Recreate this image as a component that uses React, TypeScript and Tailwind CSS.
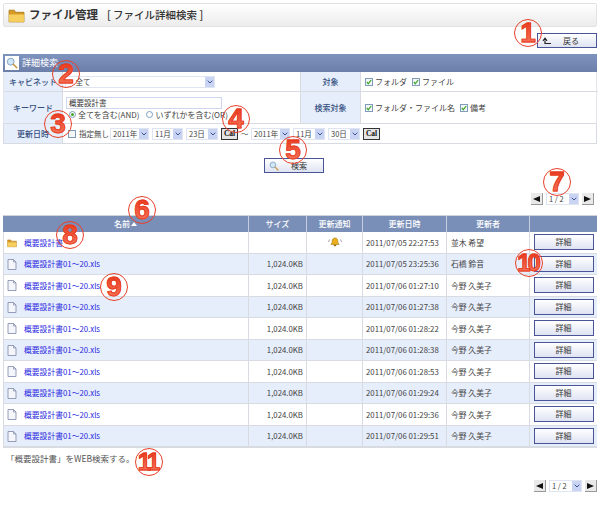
import type { ReactNode } from "react";

const JP = "font-['Noto_Sans_CJK_JP','Liberation_Sans',sans-serif]";

type FileRow = { name: string; folder?: boolean; size: string; bell?: boolean; date: string; user: string };

const file = "概要設計書01～20.xls";

const rows: FileRow[] = [
  { name: "概要設計書", folder: true, size: "", bell: true, date: "2011/07/05 22:27:53", user: "並木 希望" },
  { name: file, size: "1,024.0KB", date: "2011/07/05 23:25:36", user: "石橋 鈴音" },
  { name: file, size: "1,024.0KB", date: "2011/07/06 01:27:10", user: "今野 久美子" },
  { name: file, size: "1,024.0KB", date: "2011/07/06 01:27:38", user: "今野 久美子" },
  { name: file, size: "1,024.0KB", date: "2011/07/06 01:28:22", user: "今野 久美子" },
  { name: file, size: "1,024.0KB", date: "2011/07/06 01:28:38", user: "今野 久美子" },
  { name: file, size: "1,024.0KB", date: "2011/07/06 01:28:53", user: "今野 久美子" },
  { name: file, size: "1,024.0KB", date: "2011/07/06 01:29:24", user: "今野 久美子" },
  { name: file, size: "1,024.0KB", date: "2011/07/06 01:29:36", user: "今野 久美子" },
  { name: file, size: "1,024.0KB", date: "2011/07/06 01:29:51", user: "今野 久美子" },
];

// red numbered callouts drawn over the screenshot
const callouts = [
  { n: "1", x: 528, y: 33 },
  { n: "2", x: 66, y: 74 },
  { n: "3", x: 58, y: 124 },
  { n: "4", x: 236, y: 119 },
  { n: "5", x: 293, y: 150 },
  { n: "6", x: 142, y: 210 },
  { n: "7", x: 557, y: 182 },
  { n: "8", x: 70, y: 235 },
  { n: "9", x: 114, y: 287 },
  { n: "10", x: 529, y: 263 },
  { n: "11", x: 149, y: 462 },
];

function Callout({ n, x, y }: { n: string; x: number; y: number }) {
  return (
    <div
      className="absolute w-[28px] h-[28px] rounded-full border-[1.5px] border-[#e8402a] flex items-center justify-center"
      style={{ left: x - 14, top: y - 14 }}
    >
      <span
        className={`font-['Liberation_Sans',sans-serif] font-bold leading-none bg-gradient-to-b from-[#e62f10] to-[#f77a60] bg-clip-text text-transparent [-webkit-text-stroke:0.8px_#e8381a] ${
          n.length > 1 ? "text-[24px] tracking-[-3px] pr-[3px]" : "text-[28px]"
        }`}
      >
        {n}
      </span>
    </div>
  );
}

function FolderIcon({ size = 12 }: { size?: number }) {
  return (
    <svg width={size} height={size} viewBox="0 0 16 16" className="shrink-0">
      <path d="M1 3h5l1 2h8v9H1z" fill="#d99a24" stroke="#a87a1a" strokeWidth="0.8" />
      <path d="M1 7h14v7H1z" fill="#f7cf5e" />
    </svg>
  );
}

function FileIcon() {
  return (
    <svg width="10" height="11" viewBox="0 0 10 11" className="shrink-0">
      <path d="M1 .5h5.500L9 3v7.500H1z" fill="#f4f6fb" stroke="#7d88a8" strokeWidth="0.8" />
      <path d="M6.500.5V3H9" fill="none" stroke="#7d88a8" strokeWidth="0.7" />
    </svg>
  );
}

function Magnifier({ size = 14 }: { size?: number }) {
  return (
    <svg width={size} height={size} viewBox="0 0 14 14" className="shrink-0">
      <circle cx="5.500" cy="5.500" r="4" fill="#cfe6f7" stroke="#7f9fc0" strokeWidth="1.100" />
      <path d="M8.600 8.600l4 4" stroke="#c99a45" strokeWidth="1.800" strokeLinecap="round" />
    </svg>
  );
}

function Bell() {
  return (
    <svg width="14" height="10" viewBox="0 0 14 10">
      <path d="M7 1c2 0 2.800 1.500 2.800 3.400 0 1.500.8 2.300 1.400 3H2.800c.6-.7 1.400-1.500 1.400-3C4.200 2.500 5 1 7 1z" fill="#eeb018" stroke="#9a7414" strokeWidth="0.6" />
      <rect x="5.800" y="7.600" width="2.400" height="1.600" fill="#9a7414" />
      <path d="M1.500 2.500L.5 5M12.500 2.500l1 2.500" stroke="#8a8a8a" strokeWidth="0.8" />
    </svg>
  );
}

function Check({ checked = true }: { checked?: boolean }) {
  return (
    <span className="w-[8px] h-[8px] border border-[#7f9db9] bg-[#f4f6f8] flex items-center justify-center shrink-0">
      {checked && (
        <svg width="6" height="6" viewBox="0 0 6 6">
          <path d="M.8 3l1.500 1.700L5.200 1" fill="none" stroke="#3fa82a" strokeWidth="1.200" />
        </svg>
      )}
    </span>
  );
}

function Radio({ checked = false }: { checked?: boolean }) {
  return (
    <span className="w-[7px] h-[7px] rounded-full border border-[#7f9db9] bg-white flex items-center justify-center shrink-0">
      {checked && <span className="w-[3px] h-[3px] rounded-full bg-[#3fa82a]" />}
    </span>
  );
}

function Select({ label, w }: { label: string; w: string }) {
  return (
    <span className={`${w} h-[12px] bg-white border border-[#dfe4f2] flex items-center justify-between shrink-0`}>
      <span className="pl-[2px] text-[7.5px] leading-none text-[#444] whitespace-nowrap">{label}</span>
      <span className="w-[9px] h-[10px] bg-[#c9d3f2] flex items-center justify-center">
        <svg width="6" height="4" viewBox="0 0 6 4">
          <path d="M.7.7L3 3l2.300-2.300" fill="none" stroke="#3e5296" strokeWidth="1" />
        </svg>
      </span>
    </span>
  );
}

function Cal() {
  return (
    <span className="w-[17px] h-[12px] border border-[#333] bg-[#e4e4e4] flex items-center justify-center text-[7.5px] font-bold text-[#111] leading-none font-['Liberation_Serif',serif] shrink-0">
      Cal
    </span>
  );
}

function Btn({ children, className }: { children: ReactNode; className: string }) {
  return (
    <span
      className={`border border-[#4a5597] bg-gradient-to-b from-white to-[#dfe3f2] flex items-center text-[8px] text-[#333] leading-none ${className}`}
    >
      {children}
    </span>
  );
}

function PageArrow({ left }: { left?: boolean }) {
  return (
    <span className="w-[12px] h-[12px] bg-[#e9e9e9] border-b border-r border-[#999] flex items-center justify-center shrink-0">
      <svg width="7" height="6" viewBox="0 0 7 6">
        <path d={left ? "M0 3l7-3v6z" : "M7 3L0 0v6z"} fill="#111" />
      </svg>
    </span>
  );
}

function Pager({ className }: { className: string }) {
  return (
    <div className={`flex items-center justify-end gap-[3px] ${className}`}>
      <PageArrow left />
      <Select label=" 1 / 2" w="w-[33px]" />
      <PageArrow />
    </div>
  );
}

function Label({ children, className = "" }: { children: ReactNode; className?: string }) {
  return (
    <div className={`bg-[#e6edfb] text-[#34507f] font-medium flex items-center justify-center border-r border-[#d8dbe2] text-[8px] ${className}`}>
      {children}
    </div>
  );
}

const cols = "grid grid-cols-[246px_58px_56px_84px_83px_67px]";

export default function App() {
  return (
    <div className={`relative w-[600px] h-[505px] bg-white overflow-hidden ${JP}`}>
      {/* title bar */}
      <div className="mx-[3px] mt-[3px] h-[24px] border border-[#e2e2e2] rounded-[2px] bg-gradient-to-b from-white to-[#ececec] flex items-center pl-[4px]">
        <FolderIcon size={17} />
        <span className="ml-[4px] text-[11.5px] font-bold text-[#333] leading-none">ファイル管理</span>
        <span className="ml-[9px] text-[10.5px] font-medium text-[#333] leading-none">[ ファイル詳細検索 ]</span>
      </div>

      <div className="mt-[6px] mr-[3px] flex justify-end">
        <Btn className="w-[60px] h-[15px] pl-[4px]">
          <svg width="10" height="8" viewBox="0 0 10 8">
            <path d="M9 6.500H3V3.500M1 3.800l2-2.500 2 2.500" fill="none" stroke="#222" strokeWidth="1.200" />
          </svg>
          <span className="ml-[11px]">戻る</span>
        </Btn>
      </div>

      {/* search panel */}
      <div className="mx-[3px] mt-[6px] border-b border-[#d8dbe2]">
        <div className="h-[18px] bg-gradient-to-b from-[#7f93bf] to-[#6b7fa9] flex items-center pl-[2px] gap-[3px] text-[9px] text-white">
          <span className="bg-white w-[14px] h-[14px] flex items-center justify-center">
            <Magnifier size={12} />
          </span>
          詳細検索
        </div>

        <div className="grid grid-cols-[59px_238px_60px_237px] text-[8px] text-[#444] border-x border-[#e4e6ec]">
          <Label className="h-[20px] border-b">キャビネット</Label>
          <div className="h-[20px] border-b border-r border-[#d8dbe2] flex items-center pl-[2px]">
            <Select label="　全て" w="w-[150px]" />
          </div>
          <Label className="h-[20px] border-b">対象</Label>
          <div className="h-[20px] border-b border-[#d8dbe2] flex items-center gap-[2px] pl-[4px]">
            <Check /> フォルダ <span className="w-[1px]" /> <Check /> ファイル
          </div>

          <Label className="h-[31px]">キーワード</Label>
          <div className="h-[31px] border-r border-[#d8dbe2] flex flex-col justify-center gap-[2px] pl-[3px]">
            <span className="w-[156px] h-[12px] border border-[#cdd6ee] pl-[2px] text-[7.5px] leading-[10px] text-[#333]">概要設計書</span>
            <span className="flex items-center gap-[2px] pl-[3px] text-[8px] leading-none whitespace-nowrap">
              <Radio checked /> 全てを含む(AND) <span className="w-[3px]" /> <Radio /> いずれかを含む(OR)
            </span>
          </div>
          <Label className="h-[31px]">検索対象</Label>
          <div className="h-[31px] flex items-center gap-[2px] pl-[4px]">
            <Check /> フォルダ・ファイル名 <span className="w-[1px]" /> <Check /> 備考
          </div>
        </div>

        <div className="grid grid-cols-[59px_1fr] border-x border-t border-[#d8dbe2] h-[20px] text-[7.5px] text-[#444]">
          <Label>更新日時</Label>
          <div className="flex items-center gap-[3px] pl-[5px] whitespace-nowrap">
            <Check checked={false} />
            <span className="w-[28px]">指定無し</span>
            <Select label="2011年" w="w-[39px]" />
            <Select label="11月" w="w-[31px]" />
            <Select label="23日" w="w-[32px]" />
            <Cal />
            <span className="w-[7px]">～</span>
            <Select label="2011年" w="w-[39px]" />
            <Select label="11月" w="w-[32px]" />
            <Select label="30日" w="w-[32px]" />
            <Cal />
          </div>
        </div>
      </div>

      <div className="mt-[14px] mr-[12px] flex justify-center">
        <Btn className="w-[60px] h-[15px] pl-[4px] gap-[12px]">
          <Magnifier size={10} />
          <span>検索</span>
        </Btn>
      </div>

      <Pager className="mt-[20px] mr-[6px] h-[12px]" />

      {/* result table */}
      <div className="mx-[3px] mt-[10px] border-b border-[#d8dbe2]">
        <div className={`${cols} h-[17px] bg-[#7a8fb8] text-white text-[8px] font-medium border-t border-[#cfd3dc]`}>
          <div className="flex items-center justify-center border-r border-[#c4cde0]">
            名前
            <svg width="6" height="4" viewBox="0 0 6 4" className="ml-[1px]">
              <path d="M3 0l3 4H0z" fill="#fff" />
            </svg>
          </div>
          <div className="flex items-center justify-center border-r border-[#c4cde0]">サイズ</div>
          <div className="flex items-center justify-center border-r border-[#c4cde0]">更新通知</div>
          <div className="flex items-center justify-center border-r border-[#c4cde0]">更新日時</div>
          <div className="flex items-center justify-center border-r border-[#c4cde0]">更新者</div>
          <div />
        </div>
        {rows.map((r, i) => (
          <div
            key={i}
            className={`${cols} h-[21.5px] border-b border-[#d8dbe2] text-[7.8px] text-[#444] ${i % 2 === 1 ? "bg-[#e6edfb]" : "bg-white"}`}
          >
            <div className="flex items-center border-r border-l border-[#d8dbe2] pl-[3px] gap-[7px] text-[#2a2ae0] pt-[1px]">
              {r.folder ? <FolderIcon size={10} /> : <FileIcon />}
              <span className="whitespace-nowrap">{r.name}</span>
            </div>
            <div className="flex items-center justify-end pr-[3px] border-r border-[#d8dbe2] pt-[1px]">{r.size}</div>
            <div className="flex items-center justify-center border-r border-[#d8dbe2]">{r.bell && <Bell />}</div>
            <div className="flex items-center pl-[3px] border-r border-[#d8dbe2] whitespace-nowrap pt-[1px]">{r.date}</div>
            <div className="flex items-center pl-[4px] border-r border-[#d8dbe2] whitespace-nowrap pt-[1px]">{r.user}</div>
            <div className="flex items-center justify-center">
              <Btn className="w-[60px] h-[16px] justify-center">詳細</Btn>
            </div>
          </div>
        ))}
      </div>

      <p className="ml-[6px] mt-[4px] text-[8.5px] leading-[12px] text-[#555]">「概要設計書」をWEB検索する。</p>

      <Pager className="mt-[16px] mr-[3px] h-[12px]" />

      {callouts.map((c) => (
        <Callout key={c.n} {...c} />
      ))}
    </div>
  );
}
